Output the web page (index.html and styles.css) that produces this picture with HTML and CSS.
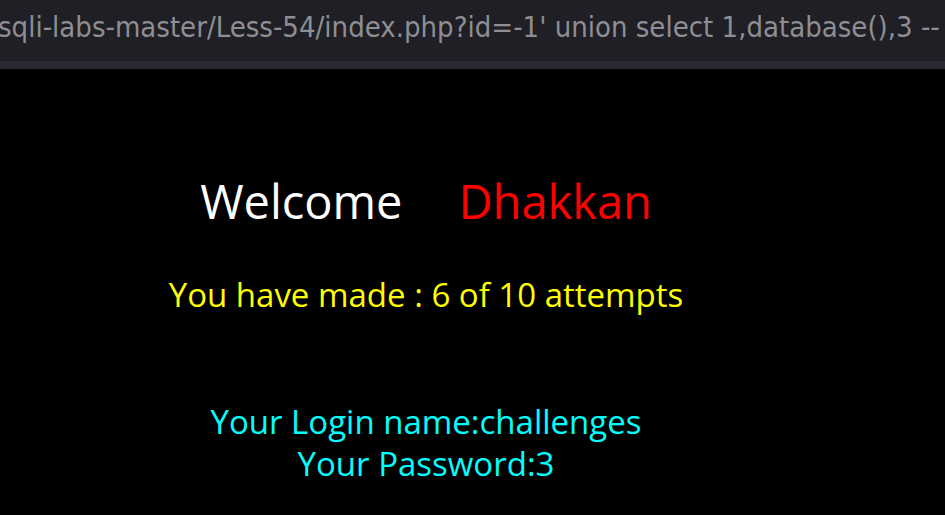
FILE: index.html
```html
<!DOCTYPE html>
<html lang="en">
<head>
  <meta charset="UTF-8" />
  <title>Less-54</title>
  <link rel="stylesheet" href="styles.css">
</head>
<body>
  <div class="address-bar">
    <div class="url">sqli-labs-master/Less-54/index.php?id=-1' union select 1,database(),3 --</div>
  </div>
  <div class="address-strip"></div>

  <main class="page">
    <div class="welcome">
      <span class="welcome-word">Welcome</span>
      <span class="user">Dhakkan</span>
    </div>
    <div class="attempts">You have made : 6 of 10 attempts</div>

    <div class="result">
      <div>Your Login name:challenges</div>
      <div>Your Password:3</div>
    </div>
  </main>
</body>
</html>
```

FILE: styles.css
```css
* {
  box-sizing: border-box;
}

body {
  margin: 0;
  background: #000000;
  font-family: 'Open Sans', 'Noto Sans', sans-serif;
  overflow: hidden;
}

/* Browser address bar (cropped) */
.address-bar {
  height: 61px;
  background: #1f1f25;
  padding-top: 12px;
  overflow: hidden;
  white-space: nowrap;
}

.url {
  font-family: 'DejaVu Sans Condensed', 'DejaVu Sans', sans-serif;
  font-size: 29px;
  line-height: 30px;
  color: #8e8e93;
  margin-left: -2px;
}

.address-strip {
  height: 8px;
  background: #2a2a32;
}

/* Page body */
.page {
  width: 852px;
  display: flex;
  flex-direction: column;
  align-items: center;
  text-align: center;
  padding-top: 109px;
}

.welcome {
  display: flex;
  gap: 56px;
  font-size: 47px;
  line-height: 1;
}

.welcome-word {
  color: #ffffff;
}

.user {
  color: #ff0000;
}

.attempts {
  color: #ffff00;
  font-size: 33px;
  margin-top: 47px;
}

.result {
  color: #00ffff;
  font-size: 33px;
  line-height: 42px;
  margin-top: 84px;
}
```
